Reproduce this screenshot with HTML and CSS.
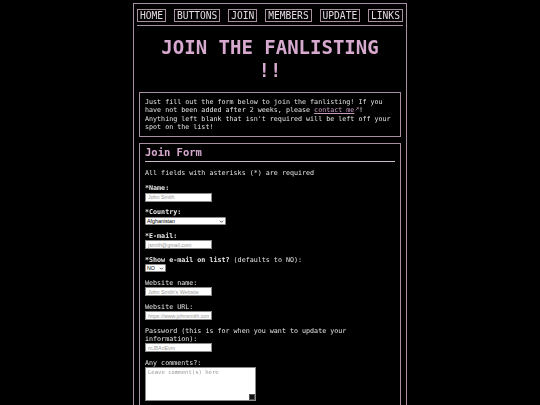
FILE: index.html
```html
<!DOCTYPE html>
<html>
<head>
<meta charset="utf-8">
<link rel="stylesheet" href="styles.css">
</head>
<body>
<div class="page">
  <nav class="nav">
    <a class="btn">HOME</a>
    <a class="btn">BUTTONS</a>
    <a class="btn">JOIN</a>
    <a class="btn">MEMBERS</a>
    <a class="btn">UPDATE</a>
    <a class="btn">LINKS</a>
  </nav>
  <h1 class="title">JOIN THE FANLISTING<br>!!</h1>
  <div class="box intro">
    <span class="plain">Just fill out the form below to join the fanlisting! If you have not been added after 2 weeks, please </span><a class="link">contact me</a><svg class="ext" viewBox="0 0 6 6" width="4" height="4"><path d="M1 5 L5 1 M2.5 1 H5 V3.5" stroke="#c9a3c1" stroke-width="0.9" fill="none"/></svg><span class="plain">! Anything left blank that isn't required will be left off your spot on the list!</span>
  </div>
  <div class="box form">
    <h2 class="form-title"><span class="form-title-text">Join Form</span></h2>
    <p class="note plain">All fields with asterisks (*) are required</p>
    <div class="field">
      <label class="req plain">*Name:</label>
      <input class="inp" type="text" placeholder="John Smith">
    </div>
    <div class="field">
      <label class="req plain">*Country:</label>
      <div class="sel-wrap country">
        <select class="sel"><option>Afghanistan</option></select>
        <svg class="chev" viewBox="0 0 6 4" width="5" height="3"><path d="M1 1 L3 3 L5 1" stroke="#222" stroke-width="1" fill="none"/></svg>
      </div>
    </div>
    <div class="field">
      <label class="req plain">*E-mail:</label>
      <input class="inp" type="text" placeholder="jsmith@gmail.com">
    </div>
    <div class="field">
      <label class="plain"><b class="req">*Show e-mail on list?</b> (defaults to NO):</label>
      <div class="sel-wrap yesno">
        <select class="sel"><option>NO</option></select>
        <svg class="chev" viewBox="0 0 6 4" width="5" height="3"><path d="M1 1 L3 3 L5 1" stroke="#222" stroke-width="1" fill="none"/></svg>
      </div>
    </div>
    <div class="field">
      <label class="plain">Website name:</label>
      <input class="inp" type="text" placeholder="John Smith's Website">
    </div>
    <div class="field">
      <label class="plain">Website URL:</label>
      <input class="inp" type="text" placeholder="https://www.johnsmith.com">
    </div>
    <div class="field">
      <label class="plain">Password (this is for when you want to update your information):</label>
      <input class="inp" type="text" placeholder="mJ8AnEvm">
    </div>
    <div class="field">
      <label class="plain">Any comments?:</label>
      <div class="ta-wrap plain">
        <textarea class="ta" placeholder="Leave comment(s) here"></textarea>
        <span class="grip"></span>
      </div>
    </div>
  </div>
</div>
</body>
</html>
```
FILE: styles.css
```css
html, body {
  margin: 0;
  padding: 0;
  background: #000;
}
body {
  font-family: "DejaVu Sans Mono", "Liberation Mono", monospace;
  color: #e4e2e4;
  font-size: 6.7px;
  line-height: 8.3px;
}
.page {
  margin: 3px auto 0;
  border: 1px solid #a88fa2;
  padding: 0 3px;
  min-height: 420px;
  box-sizing: content-box;
  width: 266px;
}
.plain {
  filter: grayscale(1);
}
.nav {
  display: flex;
  justify-content: space-between;
  padding: 5px 0 3px;
  border-bottom: 1px solid #a88fa2;
}
.btn {
  font-size: 9.6px;
  line-height: 11px;
  color: #e4dae2;
  border: 1px solid #a88fa2;
  padding: 0 2px;
  filter: brightness(1.001);
}
.title {
  margin: 10px 0 10px;
  text-align: center;
  color: #d7a9cf;
  font-size: 19px;
  line-height: 23px;
  font-weight: bold;
  filter: brightness(1.001);
}
.box {
  border: 1px solid #a88fa2;
  margin: 0 2px;
  padding: 5px 5px;
}
.intro {
  margin-bottom: 6px;
}
.link {
  color: #c89cc0;
  text-decoration: underline;
  filter: brightness(1.001);
}
.ext {
  vertical-align: 1px;
  margin-left: 0.5px;
}
.form {
  padding-top: 2px;
  min-height: 300px;
}
.form-title {
  margin: 0;
  font-size: 10.5px;
  line-height: 13px;
  color: #d7a9cf;
  font-weight: bold;
  padding-bottom: 2px;
  border-bottom: 1px solid #cdb8c8;
}
.form-title-text {
  display: inline-block;
  filter: brightness(1.001);
}
.note {
  margin: 7px 0 7px;
}
.field {
  margin-bottom: 6.6px;
}
.field label {
  display: block;
}
.req {
  font-weight: bold;
  color: #f2e6ee;
}
.inp {
  display: block;
  box-sizing: border-box;
  width: 67px;
  height: 9px;
  margin: 0;
  padding: 0 2px;
  border: 1px solid #8a8a8a;
  background: #fff;
  font-family: "Liberation Sans", Arial, sans-serif;
  font-size: 5.3px;
  outline: none;
}
.inp::placeholder {
  color: #9a9a9a;
}
.sel-wrap {
  position: relative;
  height: 8.5px;
}
.sel {
  -webkit-appearance: none;
  appearance: none;
  display: block;
  box-sizing: border-box;
  width: 100%;
  height: 8.5px;
  margin: 0;
  padding: 0 1px;
  border: 1px solid #8a8a8a;
  border-radius: 1px;
  background: #fff;
  color: #000;
  font-family: "Liberation Sans", Arial, sans-serif;
  font-size: 5.3px;
  line-height: 6px;
}
.chev {
  position: absolute;
  right: 2px;
  top: 3px;
}
.country { width: 81px; }
.yesno { width: 21px; }
.ta-wrap {
  position: relative;
  width: 111px;
  height: 34px;
}
.ta {
  display: block;
  box-sizing: border-box;
  width: 111px;
  height: 34px;
  margin: 0;
  padding: 1px 2px;
  border: 1px solid #8a8a8a;
  background: #fff;
  font-family: "DejaVu Sans Mono", monospace;
  font-size: 5.6px;
  line-height: 7px;
  resize: none;
}
.ta::placeholder {
  color: #9a9a9a;
}
.grip {
  position: absolute;
  right: 1px;
  bottom: 1px;
  width: 6px;
  height: 6px;
  background: #111;
  border: 0.5px solid #555;
  box-sizing: border-box;
}
```
